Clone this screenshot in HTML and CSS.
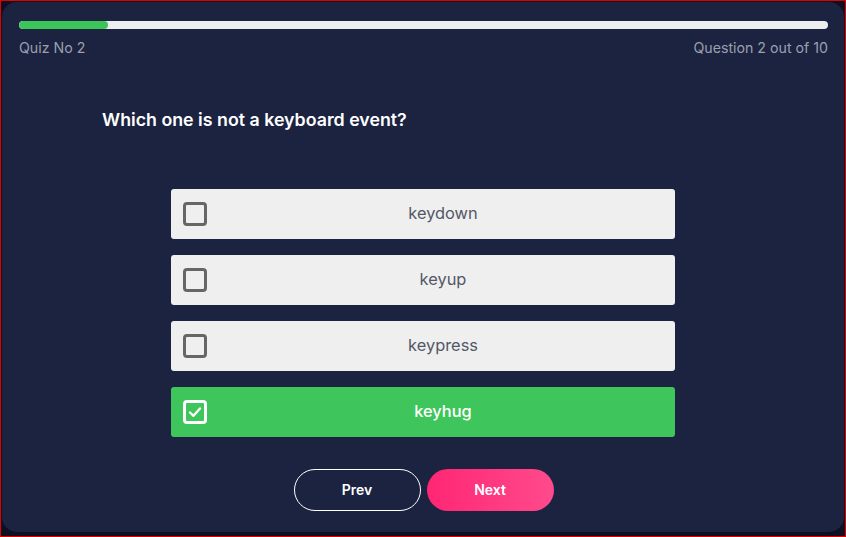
FILE: index.html
```html
<!DOCTYPE html>
<html>
<head>
<meta charset="utf-8">
<link rel="stylesheet" href="styles.css">
</head>
<body>
<div class="frame">
  <div class="card">
    <div class="progress"><div class="progress-fill" style="width: 11%"></div></div>
    <div class="meta">
      <span>Quiz No 2</span>
      <span>Question 2 out of 10</span>
    </div>
    <h2 class="question">Which one is not a keyboard event?</h2>
    <div class="options">
      <div class="option"><span class="box"></span><span class="label">keydown</span></div>
      <div class="option"><span class="box"></span><span class="label">keyup</span></div>
      <div class="option"><span class="box"></span><span class="label">keypress</span></div>
      <div class="option selected"><span class="box"><svg viewBox="0 0 16 16" width="16" height="16"><path d="M3 8.5 L6.5 11.8 L13 4.5" fill="none" stroke="#fff" stroke-width="2.4" stroke-linecap="round" stroke-linejoin="round"/></svg></span><span class="label">keyhug</span></div>
    </div>
    <div class="actions">
      <button class="btn prev">Prev</button>
      <button class="btn next">Next</button>
    </div>
  </div>
</div>
</body>
</html>
```
FILE: styles.css
```css
* { box-sizing: border-box; }
html, body { margin: 0; padding: 0; }
body {
  width: 846px;
  height: 537px;
  background: #e00000;
  padding: 1px;
  font-family: "Inter", "Open Sans", sans-serif;
}
.frame {
  width: 100%;
  height: 100%;
  background: #0c1022;
  padding: 1px 1px 4px 1px;
}
.card {
  height: 100%;
  background: #1b2340;
  border-radius: 15px;
  padding: 19px 16px 0 17px;
  display: flex;
  flex-direction: column;
}
.progress {
  height: 8px;
  background: #eceeef;
  border-radius: 4px;
  overflow: hidden;
}
.progress-fill {
  height: 100%;
  background: #3cc65a;
  border-radius: 4px;
}
.meta {
  display: flex;
  justify-content: space-between;
  color: #9ba0ae;
  font-size: 14.2px;
  margin-top: 10px;
  line-height: 18px;
}
.question {
  margin: 52px 0 0 83px;
  color: #fff;
  font-size: 17.8px;
  font-weight: 600;
  line-height: 22px;
}
.options {
  display: flex;
  flex-direction: column;
  gap: 16px;
  width: 504px;
  margin: 58px 0 0 152px;
}
.option {
  height: 50px;
  background: #efefef;
  border-radius: 3px;
  display: flex;
  align-items: center;
  padding-left: 12px;
}
.box {
  width: 24px;
  height: 24px;
  border: 3px solid #666;
  border-radius: 4px;
  display: flex;
  align-items: center;
  justify-content: center;
  flex-shrink: 0;
}
.label {
  flex: 1;
  text-align: center;
  margin-left: 4px;
  padding-bottom: 3px;
  color: #525866;
  font-size: 16.4px;
}
.option.selected { background: #3ec55b; }
.option.selected .box { border-color: #fff; }
.option.selected .label { color: #fff; font-weight: 500; }
.actions {
  display: flex;
  justify-content: center;
  gap: 6px;
  margin-top: 32px;
}
.btn {
  width: 127px;
  height: 42px;
  border-radius: 21px;
  font-family: inherit;
  font-size: 14px;
  font-weight: 600;
  color: #fff;
  padding-bottom: 2px;
  cursor: pointer;
}
.prev {
  background: transparent;
  border: 1px solid #fff;
}
.next {
  border: none;
  background: linear-gradient(90deg, #ff2673, #ff4a8c);
}
```
